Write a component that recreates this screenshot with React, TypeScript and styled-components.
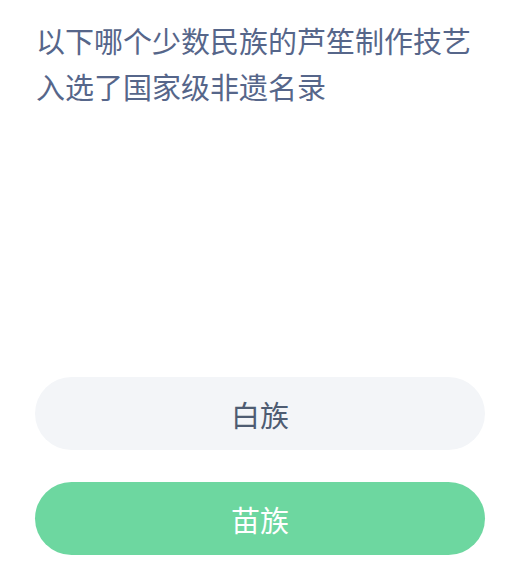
import { createGlobalStyle, styled } from "styled-components";

const OPTIONS = [
  { text: "白族", correct: false },
  { text: "苗族", correct: true },
];

const GlobalStyle = createGlobalStyle`
  html, body {
    margin: 0;
    padding: 0;
    background: #ffffff;
  }
  body {
    font-family: "Noto Sans CJK SC", "Noto Sans", sans-serif;
  }
`;

export default function App() {
  return (
    <>
      <GlobalStyle />
      <SPage>
        <SQuestion>以下哪个少数民族的芦笙制作技艺入选了国家级非遗名录</SQuestion>
        <SPicture />
        <SOptions>
          {OPTIONS.map((x, index) => (
            <SOption key={index} correct={x.correct}>
              {x.text}
            </SOption>
          ))}
        </SOptions>
      </SPage>
    </>
  );
}

const SPage = styled.div`
  width: 514px;
  height: 588px;
  box-sizing: border-box;
  padding: 17px 20px 0 35px;
  display: flex;
  flex-direction: column;
`;

const SQuestion = styled.div`
  font-size: 29px;
  line-height: 46px;
  color: #56668a;
  padding-left: 1px;
`;

const SPicture = styled.div`
  height: 268px;
`;

const SOptions = styled.div`
  display: flex;
  flex-direction: column;
  row-gap: 32px;
`;

const SOption = styled.div<{ correct: boolean }>`
  width: 450px;
  height: 73px;
  border-radius: 37px;
  display: flex;
  justify-content: center;
  align-items: center;
  font-size: 29px;
  color: ${({ correct }) => (correct ? "#ffffff" : "#4e5c72")};
  background-color: ${({ correct }) => (correct ? "#6dd7a0" : "#f3f5f8")};
`;
